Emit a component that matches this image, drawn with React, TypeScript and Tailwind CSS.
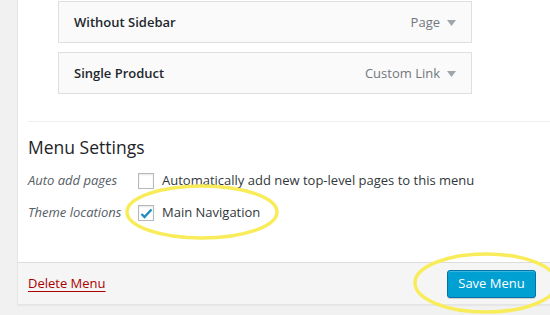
import React from "react";

const items = [
  { title: "Without Sidebar", type: "Page" },
  { title: "Single Product", type: "Custom Link" },
];

function Caret() {
  return (
    <svg width="9" height="6" viewBox="0 0 9 6" className="shrink-0">
      <path d="M0 0h9L4.5 6z" fill="#a0a5aa" />
    </svg>
  );
}

function MenuItem({ title, type }: { title: string; type: string }) {
  return (
    <div className="flex h-[42px] w-[414px] items-center justify-between border border-[#dfdfdf] bg-[#fafafa] pl-[15px] pr-[15px] pt-[2px]">
      <span className="text-[13px] font-semibold text-[#23282d]">{title}</span>
      <span className="flex items-center gap-[7px] text-[13px] text-[#72777c]">
        {type}
        <Caret />
      </span>
    </div>
  );
}

function Checkbox({ checked }: { checked?: boolean }) {
  return (
    <span className="flex h-[16px] w-[16px] shrink-0 items-center justify-center border border-[#b4b9be] bg-white shadow-[inset_0_1px_2px_rgba(0,0,0,0.1)]">
      {checked && (
        <svg width="13" height="11" viewBox="0 0 13 11">
          <path d="M1.5 6l3 3L11.5 1.5" fill="none" stroke="#1e8cbe" strokeWidth="2.4" />
        </svg>
      )}
    </span>
  );
}

export default function App() {
  return (
    <div
      className="relative h-[315px] w-[550px] overflow-hidden bg-[#f1f1f1]"
      style={{ fontFamily: '"Open Sans", sans-serif' }}
    >
      <div className="ml-[17px] border-l border-b border-[#e5e5e5] bg-white shadow-[0_1px_1px_rgba(0,0,0,0.04)]">
        <div className="flex flex-col gap-[9px] pl-[40px] pt-[1px]">
          {items.map((it) => (
            <MenuItem key={it.title} {...it} />
          ))}
        </div>

        <div className="ml-[10px] mt-[27px] border-t border-[#eeeeee] pb-[40px]">
          <h3 className="mt-[14px] text-[17.5px] font-normal leading-[22px] text-[#1d2327]">
            Menu Settings
          </h3>
          <div className="mt-[14px] flex flex-col gap-[14px] text-[13px] text-[#32373c]">
            <div className="flex h-[18px] items-center">
              <span className="w-[110px] italic text-[#555d66]">Auto add pages</span>
              <Checkbox />
              <span className="ml-[8px]">Automatically add new top-level pages to this menu</span>
            </div>
            <div className="flex h-[18px] items-center">
              <span className="w-[110px] italic text-[#555d66]">Theme locations</span>
              <Checkbox checked />
              <span className="ml-[8px]">Main Navigation</span>
            </div>
          </div>
        </div>

        <div className="flex h-[42px] items-center justify-between border-t border-[#dddddd] bg-[#f5f5f5] pl-[10px] pr-[14px]">
          <a href="#" className="text-[13px] text-[#a00] underline underline-offset-[3px]">
            Delete Menu
          </a>
          <button className="h-[28px] w-[89px] rounded-[3px] border border-[#0073aa] bg-[#00a0d2] text-[13px] text-white shadow-[inset_0_1px_0_rgba(120,200,230,0.5),0_1px_0_rgba(0,0,0,0.15)]">
            Save Menu
          </button>
        </div>
      </div>

      <svg className="pointer-events-none absolute left-0 top-0" width="550" height="315">
        <ellipse cx="202" cy="212" rx="75" ry="26" fill="none" stroke="#f8ec5a" strokeWidth="3.5" />
        <ellipse cx="486" cy="283" rx="71" ry="29" fill="none" stroke="#f8ec5a" strokeWidth="3.5" />
      </svg>
    </div>
  );
}
